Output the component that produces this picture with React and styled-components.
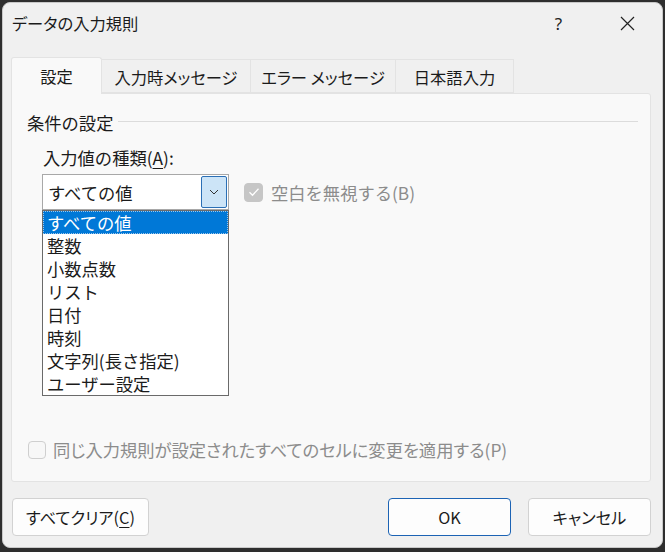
import React from "react";
import styled, { createGlobalStyle } from "styled-components";

const Global = createGlobalStyle`
  html, body { margin: 0; padding: 0; }
  body {
    width: 665px; height: 552px; overflow: hidden;
    background: #2e2e2e;
    font-family: "Noto Sans CJK JP", "Noto Sans", sans-serif;
    color: #1b1b1b;
  }
`;

const Dialog = styled.div`
  position: relative;
  margin: 2px 2px 0 2px;
  width: 661px;
  height: 546px;
  box-sizing: border-box;
  background: #f0f0f0;
  border-radius: 8px;
  border: 1px solid #c8c8c8;
  display: flex;
  flex-direction: column;
`;

const TitleBar = styled.div`
  height: 40px;
  display: flex;
  align-items: center;
  padding-left: 9px;
`;

const Title = styled.div`
  flex: 1;
  font-size: 16.3px;
  font-feature-settings: "palt";
`;

const TitleButton = styled.div`
  width: 69px;
  height: 40px;
  display: flex;
  align-items: center;
  justify-content: center;
  font-family: "Noto Sans", sans-serif;
  font-size: 17px;
  color: #222;
`;

const Body = styled.div`
  padding: 14px 11px 0 8px;
  display: flex;
  flex-direction: column;
`;

const TabRow = styled.div`
  display: flex;
  align-items: flex-end;
  height: 36px;
`;

const Tab = styled.div`
  height: ${(p) => (p.$active ? "37px" : "34px")};
  width: ${(p) => p.$w}px;
  box-sizing: border-box;
  display: flex;
  align-items: center;
  justify-content: center;
  font-size: 16.3px;
  font-feature-settings: "palt";
  padding-top: ${(p) => (p.$active ? "0" : "1px")};
  background: ${(p) => (p.$active ? "#f9f9f9" : "#f0f0f0")};
  border: 1px solid #e3e3e3;
  border-bottom: ${(p) => (p.$active ? "none" : "1px solid #e3e3e3")};
  border-left: ${(p) => (p.$first || p.$active ? "1px solid #e3e3e3" : "none")};
  border-radius: ${(p) => (p.$active ? "3px 3px 0 0" : "0")};
  position: relative;
  z-index: ${(p) => (p.$active ? 1 : 0)};
  margin-bottom: ${(p) => (p.$active ? "-1px" : "0")};
`;

const Panel = styled.div`
  position: relative;
  height: 389px;
  box-sizing: border-box;
  background: #f9f9f9;
  border: 1px solid #e3e3e3;
  border-radius: 0 3px 3px 3px;
  padding: 16px 0 0 15px;
  display: flex;
  flex-direction: column;
`;

const GroupHeader = styled.div`
  display: flex;
  align-items: center;
  gap: 5px;
  font-size: 17.3px;
  height: 24px;
  padding-right: 12px;
`;

const Rule = styled.div`
  flex: 1;
  height: 1px;
  background: #dcdcdc;
  margin-top: -1px;
`;

const FieldLabel = styled.div`
  margin: 11px 0 0 16px;
  font-size: 17.3px;
  height: 24px;
  display: flex;
  align-items: center;
`;

const U = styled.span`
  text-decoration: underline;
  text-underline-offset: 3px;
  text-decoration-thickness: 1px;
`;

const ComboRow = styled.div`
  margin: 5px 0 0 15px;
  display: flex;
  align-items: center;
  gap: 15px;
  position: relative;
`;

const Combo = styled.div`
  width: 187px;
  height: 36px;
  box-sizing: border-box;
  background: #fff;
  border: 1px solid #a8a8a8;
  display: flex;
  align-items: center;
  padding-left: 5px;
  font-size: 17.3px;
`;

const ComboText = styled.div`
  flex: 1;
`;

const ComboButton = styled.div`
  width: 26px;
  height: 32px;
  margin-right: 1px;
  box-sizing: border-box;
  background: #cce4f7;
  border: 1px solid #2b6fb5;
  border-radius: 2px;
  display: flex;
  align-items: center;
  justify-content: center;
`;

const CheckRow = styled.div`
  display: flex;
  align-items: center;
  gap: ${(p) => p.$gap}px;
  font-size: 17.3px;
  color: ${(p) => (p.$disabled ? "#8c8c8c" : "#1b1b1b")};
  font-feature-settings: ${(p) => (p.$palt ? '"palt"' : "normal")};
`;

const Box = styled.div`
  width: ${(p) => p.$size}px;
  height: ${(p) => p.$size}px;
  box-sizing: border-box;
  border-radius: 4px;
  background: ${(p) => (p.$checked ? "#c6c6c6" : "#f7f7f7")};
  border: 1px solid ${(p) => (p.$checked ? "#c6c6c6" : "#cfcfcf")};
  display: flex;
  align-items: center;
  justify-content: center;
`;

const List = styled.div`
  position: absolute;
  left: 0;
  top: 36px;
  width: 187px;
  height: 186px;
  box-sizing: border-box;
  background: #fff;
  border: 1px solid #6a6a6a;
  z-index: 5;
`;

const Item = styled.div`
  height: 23px;
  line-height: 23px;
  padding-left: 4px;
  font-size: 17.3px;
  color: ${(p) => (p.$sel ? "#fff" : "#1b1b1b")};
  background: ${(p) => (p.$sel ? "#0078d7" : "transparent")};
  outline: ${(p) => (p.$sel ? "1px dotted #9ec6ea" : "none")};
  outline-offset: -1px;
  white-space: nowrap;
`;

const Spacer = styled.div`
  flex: 1;
`;

const BottomCheck = styled.div`
  margin: 0 0 19px 1px;
`;

const Footer = styled.div`
  display: flex;
  align-items: center;
  padding: 16px 11px 0 9px;
  gap: 17px;
`;

const Button = styled.div`
  height: 38px;
  width: ${(p) => p.$w}px;
  box-sizing: border-box;
  border-radius: 4px;
  background: #fdfdfd;
  border: 1px solid ${(p) => (p.$primary ? "#1c63b4" : "#d2d2d2")};
  display: flex;
  align-items: center;
  justify-content: center;
  font-size: 16.3px;
  font-feature-settings: "palt";
  color: #1b1b1b;
`;

const items = [
  "すべての値",
  "整数",
  "小数点数",
  "リスト",
  "日付",
  "時刻",
  "文字列(長さ指定)",
  "ユーザー設定",
];

const Check = ({ color }) => (
  <svg width="12" height="10" viewBox="0 0 12 10">
    <path d="M1.5 5.2 L4.5 8.2 L10.5 1.8" fill="none" stroke={color} strokeWidth="1.3" />
  </svg>
);

export default function App() {
  return (
    <>
      <Global />
      <Dialog>
        <TitleBar>
          <Title>データの入力規則</Title>
          <TitleButton>?</TitleButton>
          <TitleButton>
            <svg width="15" height="15" viewBox="0 0 15 15">
              <path d="M1 1 L14 14 M14 1 L1 14" stroke="#222" strokeWidth="1.2" />
            </svg>
          </TitleButton>
        </TitleBar>
        <Body>
          <TabRow>
            <Tab $active $first $w={91}>設定</Tab>
            <Tab $w={149}>入力時メッセージ</Tab>
            <Tab $w={145}>エラー メッセージ</Tab>
            <Tab $w={118}>日本語入力</Tab>
          </TabRow>
          <Panel>
            <GroupHeader>
              <span>条件の設定</span>
              <Rule />
            </GroupHeader>
            <FieldLabel>
              入力値の種類(<U>A</U>):
            </FieldLabel>
            <ComboRow>
              <Combo>
                <ComboText>すべての値</ComboText>
                <ComboButton>
                  <svg width="10" height="6" viewBox="0 0 10 6">
                    <path d="M1 1 L5 5 L9 1" fill="none" stroke="#333" strokeWidth="1" />
                  </svg>
                </ComboButton>
              </Combo>
              <CheckRow $disabled $gap={8}>
                <Box $size={19} $checked>
                  <Check color="#fff" />
                </Box>
                <span>空白を無視する(B)</span>
              </CheckRow>
              <List>
                {items.map((t, i) => (
                  <Item key={t} $sel={i === 0}>
                    {t}
                  </Item>
                ))}
              </List>
            </ComboRow>
            <Spacer />
            <BottomCheck>
              <CheckRow $disabled $palt $gap={7}>
                <Box $size={18} />
                <span>同じ入力規則が設定されたすべてのセルに変更を適用する(P)</span>
              </CheckRow>
            </BottomCheck>
          </Panel>
        </Body>
        <Footer>
          <Button $w={137}>
            すべてクリア(<U>C</U>)
          </Button>
          <Spacer />
          <Button $w={123} $primary>OK</Button>
          <Button $w={123}>キャンセル</Button>
        </Footer>
      </Dialog>
    </>
  );
}
